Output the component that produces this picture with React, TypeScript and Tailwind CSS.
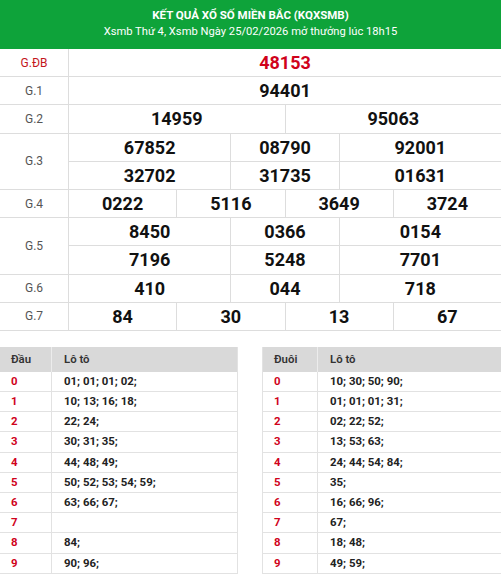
import React from "react";

const font = { fontFamily: "Roboto, 'Noto Sans', Arial, sans-serif" };

type Cell = { v: string; span: string };

function Label({ text, red, rows }: { text: string; red?: boolean; rows?: boolean }) {
  return (
    <div
      className={`bg-white flex items-center justify-center text-[12px] ${rows ? "row-span-2" : ""} ${
        red ? "text-[#c4161c]" : "text-[#555]"
      }`}
    >
      {text}
    </div>
  );
}

function Num({ v, span, red }: { v: string; span: string; red?: boolean }) {
  return (
    <div
      className={`bg-white flex items-center justify-center text-[18px] font-bold ${span} ${
        red ? "text-[#d0021b]" : "text-[#111]"
      }`}
    >
      {v}
    </div>
  );
}

const dau: [string, string][] = [
  ["0", "01; 01; 01; 02;"],
  ["1", "10; 13; 16; 18;"],
  ["2", "22; 24;"],
  ["3", "30; 31; 35;"],
  ["4", "44; 48; 49;"],
  ["5", "50; 52; 53; 54; 59;"],
  ["6", "63; 66; 67;"],
  ["7", ""],
  ["8", "84;"],
  ["9", "90; 96;"],
];

const duoi: [string, string][] = [
  ["0", "10; 30; 50; 90;"],
  ["1", "01; 01; 01; 31;"],
  ["2", "02; 22; 52;"],
  ["3", "13; 53; 63;"],
  ["4", "24; 44; 54; 84;"],
  ["5", "35;"],
  ["6", "16; 66; 96;"],
  ["7", "67;"],
  ["8", "18; 48;"],
  ["9", "49; 59;"],
];

function LotoTable({
  title,
  rows,
  firstW,
  className,
}: {
  title: string;
  rows: [string, string][];
  firstW: string;
  className: string;
}) {
  return (
    <div className={`text-[11.4px] ${className}`}>
      <div className="flex h-[25px] bg-[#d9d9d9] text-[#333] font-semibold">
        <div className={`${firstW} flex items-center pl-[11px] border-r border-[#ececec]`}>{title}</div>
        <div className="flex-1 flex items-center pl-[12px]">Lô tô</div>
      </div>
      {rows.map(([k, v]) => (
        <div key={k} className="flex h-[20.2px] border-b border-[#e2e2e2] bg-white">
          <div
            className={`${firstW} flex items-center pl-[11px] border-r border-[#e2e2e2] text-[#d0021b] font-bold`}
          >
            {k}
          </div>
          <div className="flex-1 flex items-center pl-[12px] font-bold text-[#222]">{v}</div>
        </div>
      ))}
    </div>
  );
}

export default function App() {
  const g3: Cell[] = [
    { v: "67852", span: "col-span-3" },
    { v: "08790", span: "col-span-2" },
    { v: "92001", span: "col-span-3" },
    { v: "32702", span: "col-span-3" },
    { v: "31735", span: "col-span-2" },
    { v: "01631", span: "col-span-3" },
  ];
  const g5: Cell[] = [
    { v: "8450", span: "col-span-3" },
    { v: "0366", span: "col-span-2" },
    { v: "0154", span: "col-span-3" },
    { v: "7196", span: "col-span-3" },
    { v: "5248", span: "col-span-2" },
    { v: "7701", span: "col-span-3" },
  ];
  return (
    <div className="w-[501px] bg-white" style={font}>
      <div className="h-[49px] bg-[#0ea33a] text-white flex flex-col items-center">
        <div className="text-[11.5px] font-bold leading-[13px] mt-[9px]">KẾT QUẢ XỔ SỐ MIỀN BẮC (KQXSMB)</div>
        <div className="text-[11.2px] leading-[13px] mt-[3px]">
          Xsmb Thứ 4, Xsmb Ngày 25/02/2026 mở thưởng lúc 18h15
        </div>
      </div>

      <div className="grid grid-cols-[68px_repeat(8,minmax(0,1fr))] auto-rows-[27.2px] gap-px bg-[#dddddd] border-b border-[#dddddd]">
        <Label text="G.ĐB" red />
        <Num v="48153" span="col-span-8" red />

        <Label text="G.1" />
        <Num v="94401" span="col-span-8" />

        <Label text="G.2" />
        <Num v="14959" span="col-span-4" />
        <Num v="95063" span="col-span-4" />

        <Label text="G.3" rows />
        {g3.map((c, i) => (
          <Num key={i} v={c.v} span={c.span} />
        ))}

        <Label text="G.4" />
        <Num v="0222" span="col-span-2" />
        <Num v="5116" span="col-span-2" />
        <Num v="3649" span="col-span-2" />
        <Num v="3724" span="col-span-2" />

        <Label text="G.5" rows />
        {g5.map((c, i) => (
          <Num key={i} v={c.v} span={c.span} />
        ))}

        <Label text="G.6" />
        <Num v="410" span="col-span-3" />
        <Num v="044" span="col-span-2" />
        <Num v="718" span="col-span-3" />

        <Label text="G.7" />
        <Num v="84" span="col-span-2" />
        <Num v="30" span="col-span-2" />
        <Num v="13" span="col-span-2" />
        <Num v="67" span="col-span-2" />
      </div>

      <div className="flex justify-between mt-[16px]">
        <LotoTable title="Đầu" rows={dau} firstW="w-[52px]" className="w-[238px] border-r border-[#e2e2e2]" />
        <LotoTable title="Đuôi" rows={duoi} firstW="w-[55px]" className="w-[239px] border-l border-[#e2e2e2]" />
      </div>
    </div>
  );
}
